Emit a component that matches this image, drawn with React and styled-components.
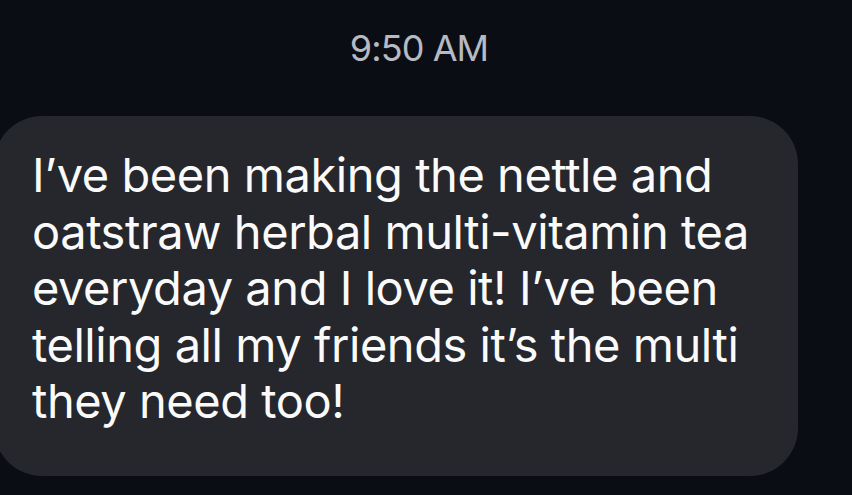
import styled, { createGlobalStyle } from 'styled-components'

const GlobalStyle = createGlobalStyle`
  html, body {
    margin: 0;
    padding: 0;
    background: #0b0d14;
  }
  body {
    font-family: Inter, "Liberation Sans", Arial, sans-serif;
    -webkit-font-smoothing: antialiased;
  }
`

// 대화 화면 전체
const Thread = styled.main`
  width: 852px;
  height: 495px;
  overflow: hidden;
  display: flex;
  flex-direction: column;
  background: #0b0d14;
`

const Timestamp = styled.div`
  align-self: center;
  margin: 28px 14px 0 0;
  height: 40px;
  line-height: 40px;
  font-size: 36px;
  color: #b6bac2;
  letter-spacing: -0.9px;
`

const Bubble = styled.div`
  align-self: flex-start;
  margin: 48px 0 0 -6px;
  width: 804px;
  box-sizing: border-box;
  padding: 31px 0 46px 38px;
  border-radius: 48px;
  background: ${(props) => props.$bg || '#25272d'};
  color: #fafafa;
  font-size: 47px;
  line-height: 56.6px;
  letter-spacing: -0.45px;
  white-space: nowrap;
`

const lines = [
  'I’ve been making the nettle and',
  'oatstraw herbal multi-vitamin tea',
  'everyday and I love it! I’ve been',
  'telling all my friends it’s the multi',
  'they need too!',
]

const App = () => {
  return (
    <>
      <GlobalStyle />
      <Thread>
        <Timestamp>9:50 AM</Timestamp>
        <Bubble>
          {lines.map((line, i) => (
            <div key={i}>{line}</div>
          ))}
        </Bubble>
      </Thread>
    </>
  )
}

export default App
